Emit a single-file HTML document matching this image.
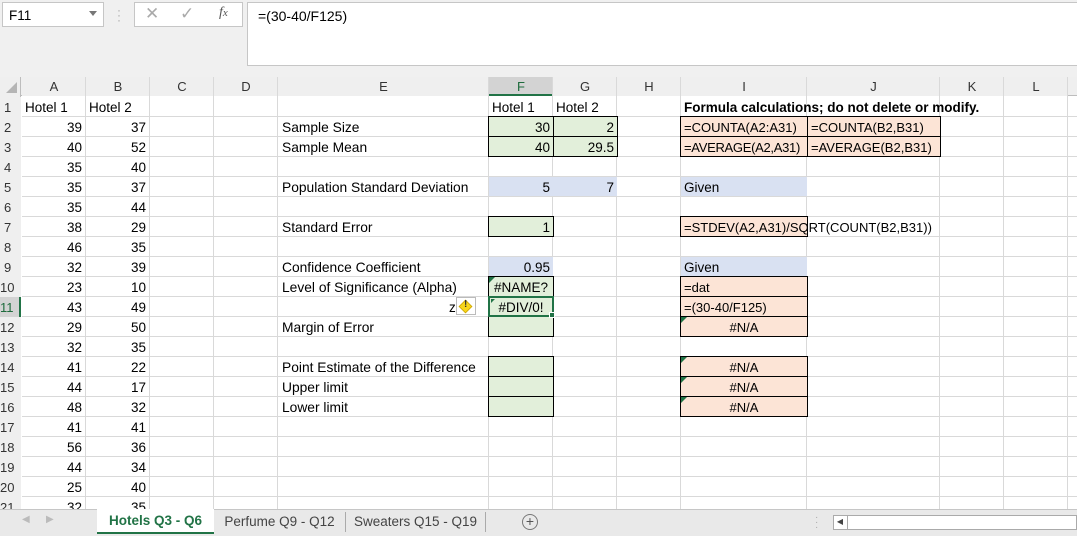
<!DOCTYPE html>
<html><head><meta charset="utf-8"><style>
*{box-sizing:border-box;margin:0;padding:0}
body{width:1077px;height:536px;overflow:hidden;background:#fff;font-family:"Liberation Sans",sans-serif;font-size:13.5px;color:#000;position:relative}
.a{position:absolute}
.hl{position:absolute;left:0;width:1077px;height:1px;background:#d9d9d9}
.vl{position:absolute;top:77px;height:432px;width:1px;background:#d9d9d9}
.t{position:absolute;height:20px;line-height:22px;padding:0 3px;white-space:nowrap}
.r{text-align:right}.c{text-align:center}
.rh{position:absolute;left:0;width:21px;height:20px;line-height:21px;padding-left:4px;background:#efefef;color:#333;font-size:13px}
.ch{position:absolute;top:77px;height:19px;line-height:20px;text-align:center;background:#efefef;color:#333;font-size:13px}
.g{background:#e2efda}.b{background:#d9e1f2}.o{background:#fce4d6}
.bx{position:absolute;border:1px solid #000;height:21px}
.o{font-size:13px}
.tri{position:absolute;width:0;height:0;border-top:6px solid #217346;border-right:6px solid transparent}
</style></head><body>
<div class="a" style="left:0;top:0;width:1077px;height:77px;background:#f0f0f0"></div>
<div class="a" style="left:2px;top:2px;width:102px;height:25px;background:#fff;border:1px solid #c6c6c6;padding:5px 6px;font-size:13.5px">F11</div>
<div class="a" style="left:89px;top:11px;border-top:5px solid #777;border-left:4px solid transparent;border-right:4px solid transparent"></div>
<div class="a" style="left:117px;top:8px;color:#aaa;font-size:12px;line-height:5px">·<br>·<br>·</div>
<div class="a" style="left:134px;top:2px;width:109px;height:25px;background:#fff;border:1px solid #c6c6c6"></div>
<div class="a" style="left:145px;top:4px;color:#aaa;font-size:17px">✕</div>
<div class="a" style="left:180px;top:4px;color:#aaa;font-size:17px">✓</div>
<div class="a" style="left:219px;top:5px;color:#555;font-size:14px;font-style:italic;font-family:'Liberation Serif',serif">f<span style="font-size:11px">x</span></div>
<div class="a" style="left:247px;top:2px;width:832px;height:64px;background:#fff;border:1px solid #c6c6c6;padding:5px 10px;font-size:14px">=(30-40/F125)</div>
<div class="a" style="left:0;top:77px;width:1077px;height:19px;background:#efefef;border-bottom:1px solid #bdbdbd"></div>
<div class="a" style="left:0;top:77px;width:21px;height:432px;background:#efefef;border-right:1px solid #bdbdbd"></div>
<div class="a" style="left:6px;top:82px;border-bottom:11px solid #b5b5b5;border-left:11px solid transparent"></div>
<div class="ch" style="left:22px;width:64px">A</div>
<div class="ch" style="left:86px;width:64px">B</div>
<div class="ch" style="left:150px;width:64px">C</div>
<div class="ch" style="left:214px;width:64px">D</div>
<div class="ch" style="left:278px;width:211px">E</div>
<div class="ch" style="left:489px;width:64px;background:#d3d3d3;color:#1e6b3c;border-bottom:2px solid #217346">F</div>
<div class="ch" style="left:553px;width:64px">G</div>
<div class="ch" style="left:617px;width:64px">H</div>
<div class="ch" style="left:681px;width:126px">I</div>
<div class="ch" style="left:807px;width:133px">J</div>
<div class="ch" style="left:940px;width:64px">K</div>
<div class="ch" style="left:1004px;width:64px">L</div>
<div class="hl" style="top:116px;left:22px"></div><div class="hl" style="top:136px;left:22px"></div><div class="hl" style="top:156px;left:22px"></div><div class="hl" style="top:176px;left:22px"></div><div class="hl" style="top:196px;left:22px"></div><div class="hl" style="top:216px;left:22px"></div><div class="hl" style="top:236px;left:22px"></div><div class="hl" style="top:256px;left:22px"></div><div class="hl" style="top:276px;left:22px"></div><div class="hl" style="top:296px;left:22px"></div><div class="hl" style="top:316px;left:22px"></div><div class="hl" style="top:336px;left:22px"></div><div class="hl" style="top:356px;left:22px"></div><div class="hl" style="top:376px;left:22px"></div><div class="hl" style="top:396px;left:22px"></div><div class="hl" style="top:416px;left:22px"></div><div class="hl" style="top:436px;left:22px"></div><div class="hl" style="top:456px;left:22px"></div><div class="hl" style="top:476px;left:22px"></div><div class="hl" style="top:496px;left:22px"></div>
<div class="vl" style="left:85px"></div><div class="vl" style="left:149px"></div><div class="vl" style="left:213px"></div><div class="vl" style="left:277px"></div><div class="vl" style="left:488px"></div><div class="vl" style="left:552px"></div><div class="vl" style="left:616px"></div><div class="vl" style="left:680px"></div><div class="vl" style="left:806px"></div><div class="vl" style="left:939px"></div><div class="vl" style="left:1003px"></div><div class="vl" style="left:1067px"></div>
<div class="rh" style="top:97px">1</div><div class="rh" style="top:117px">2</div><div class="rh" style="top:137px">3</div><div class="rh" style="top:157px">4</div><div class="rh" style="top:177px">5</div><div class="rh" style="top:197px">6</div><div class="rh" style="top:217px">7</div><div class="rh" style="top:237px">8</div><div class="rh" style="top:257px">9</div><div class="rh" style="top:277px;padding-left:0">10</div><div class="rh" style="top:297px;padding-left:0;background:#d3d3d3;color:#1e6b3c;border-right:2px solid #217346">11</div><div class="rh" style="top:317px;padding-left:0">12</div><div class="rh" style="top:337px;padding-left:0">13</div><div class="rh" style="top:357px;padding-left:0">14</div><div class="rh" style="top:377px;padding-left:0">15</div><div class="rh" style="top:397px;padding-left:0">16</div><div class="rh" style="top:417px;padding-left:0">17</div><div class="rh" style="top:437px;padding-left:0">18</div><div class="rh" style="top:457px;padding-left:0">19</div><div class="rh" style="top:477px;padding-left:0">20</div><div class="rh" style="top:497px;padding-left:0">21</div>
<div class="t" style="left:22px;top:97px">Hotel 1</div><div class="t" style="left:86px;top:97px">Hotel 2</div>
<div class="a" style="left:22px;top:118px;width:63px;line-height:20px;text-align:right;padding-right:3px">39<br>40<br>35<br>35<br>35<br>38<br>46<br>32<br>23<br>43<br>29<br>32<br>41<br>44<br>48<br>41<br>56<br>44<br>25<br>32</div>
<div class="a" style="left:86px;top:118px;width:63px;line-height:20px;text-align:right;padding-right:3px">37<br>52<br>40<br>37<br>44<br>29<br>35<br>39<br>10<br>49<br>50<br>35<br>22<br>17<br>32<br>41<br>36<br>34<br>40<br>35</div>
<div class="a" style="left:278px;top:118px;line-height:20px;padding-left:4px;white-space:nowrap;font-size:13.8px">Sample Size<br>Sample Mean<br><br>Population Standard Deviation<br><br>Standard Error<br><br>Confidence Coefficient<br>Level of Significance (Alpha)<br><br>Margin of Error<br><br>Point Estimate of the Difference<br>Upper limit<br>Lower limit</div>
<div class="t" style="left:446px;top:297px;width:14px">z</div>
<div class="a" style="left:456px;top:297px;width:20px;height:18px;border:1px solid #bbb;background:#fff"></div>
<div class="a" style="left:459px;top:300px;width:13px;height:13px;background:#f7d51a;transform:rotate(45deg) scale(.75);border:1px solid #c8a000"></div>
<div class="a" style="left:464px;top:299px;font-size:10px;font-weight:bold;color:#333">!</div>
<div class="t" style="left:489px;top:97px">Hotel 1</div><div class="t" style="left:553px;top:97px">Hotel 2</div>
<div class="t" style="left:681px;top:97px;font-weight:bold">Formula calculations; do not delete or modify.</div>
<div class="bx g t r" style="left:488px;top:116px;width:66px">30</div>
<div class="bx g t r" style="left:553px;top:116px;width:65px">2</div>
<div class="bx g t r" style="left:488px;top:136px;width:66px">40</div>
<div class="bx g t r" style="left:553px;top:136px;width:65px">29.5</div>
<div class="t b r" style="left:489px;top:177px;width:64px;height:19px">5</div>
<div class="t b r" style="left:553px;top:177px;width:64px;height:19px">7</div>
<div class="t b" style="left:681px;top:177px;width:126px;height:19px">Given</div>
<div class="bx g t r" style="left:488px;top:216px;width:66px">1</div>
<div class="t b r" style="left:489px;top:257px;width:64px;height:19px">0.95</div>
<div class="t b" style="left:681px;top:257px;width:126px;height:19px">Given</div>
<div class="bx g t c" style="left:488px;top:276px;width:66px">#NAME?</div>
<div class="bx g t" style="left:488px;top:316px;width:66px"></div>
<div class="bx g t c" style="left:488px;top:296px;width:66px;border:2px solid #217346;line-height:19px">#DIV/0!</div>
<div class="a" style="left:549px;top:312px;width:6px;height:6px;background:#217346;border:1px solid #fff"></div>
<div class="bx g t" style="left:488px;top:356px;width:66px"></div>
<div class="bx g t" style="left:488px;top:376px;width:66px"></div>
<div class="bx g t" style="left:488px;top:396px;width:66px"></div>
<div class="bx o t" style="left:680px;top:116px;width:128px">=COUNTA(A2:A31)</div>
<div class="bx o t" style="left:807px;top:116px;width:134px">=COUNTA(B2,B31)</div>
<div class="bx o t" style="left:680px;top:136px;width:128px;letter-spacing:-0.3px">=AVERAGE(A2,A31)</div>
<div class="bx o t" style="left:807px;top:136px;width:134px">=AVERAGE(B2,B31)</div>
<div class="bx o t" style="left:680px;top:216px;width:128px;overflow:visible">=STDEV(A2,A31)/SQRT(COUNT(B2,B31))</div>
<div class="bx o t" style="left:680px;top:276px;width:128px">=dat</div>
<div class="bx o t" style="left:680px;top:296px;width:128px">=(30-40/F125)</div>
<div class="bx o t c" style="left:680px;top:316px;width:128px">#N/A</div>
<div class="bx o t c" style="left:680px;top:356px;width:128px">#N/A</div>
<div class="bx o t c" style="left:680px;top:376px;width:128px">#N/A</div>
<div class="bx o t c" style="left:680px;top:396px;width:128px">#N/A</div>
<div class="tri" style="left:489px;top:277px"></div><div class="tri" style="left:491px;top:299px;border-top-width:4px;border-right-width:4px"></div>
<div class="tri" style="left:681px;top:317px"></div><div class="tri" style="left:681px;top:357px"></div><div class="tri" style="left:681px;top:377px"></div><div class="tri" style="left:681px;top:397px"></div>
<div class="a" style="left:0;top:509px;width:1077px;height:27px;background:#e9e9e9;border-top:1px solid #c6c6c6"></div>
<div class="a" style="left:22px;top:514px;color:#bbb;font-size:10px">◀</div>
<div class="a" style="left:46px;top:514px;color:#bbb;font-size:10px">▶</div>
<div class="a" style="left:97px;top:509px;width:117px;height:25px;background:#fff;border-bottom:2px solid #217346;color:#217346;font-weight:bold;text-align:center;line-height:24px;font-size:13.5px">Hotels Q3 - Q6</div>
<div class="a" style="left:214px;top:512px;width:132px;height:20px;line-height:20px;text-align:center;color:#444;border-right:1px solid #aaa;font-size:13.5px">Perfume Q9 - Q12</div>
<div class="a" style="left:346px;top:512px;width:140px;height:20px;line-height:20px;text-align:center;color:#444;border-right:1px solid #aaa;font-size:13.5px">Sweaters Q15 - Q19</div>
<div class="a" style="left:522px;top:514px;width:16px;height:16px;border:1px solid #777;border-radius:50%;text-align:center;line-height:13px;color:#555;font-size:14px">+</div>
<div class="a" style="left:815px;top:515px;color:#aaa;font-size:10px;line-height:5px">·<br>·<br>·</div>
<div class="a" style="left:833px;top:515px;width:244px;height:15px;background:#fff;border:1px solid #aaa"></div>
<div class="a" style="left:833px;top:515px;width:15px;height:15px;border-right:1px solid #aaa;font-size:8px;line-height:14px;text-align:center;color:#444">◀</div>
</body></html>
